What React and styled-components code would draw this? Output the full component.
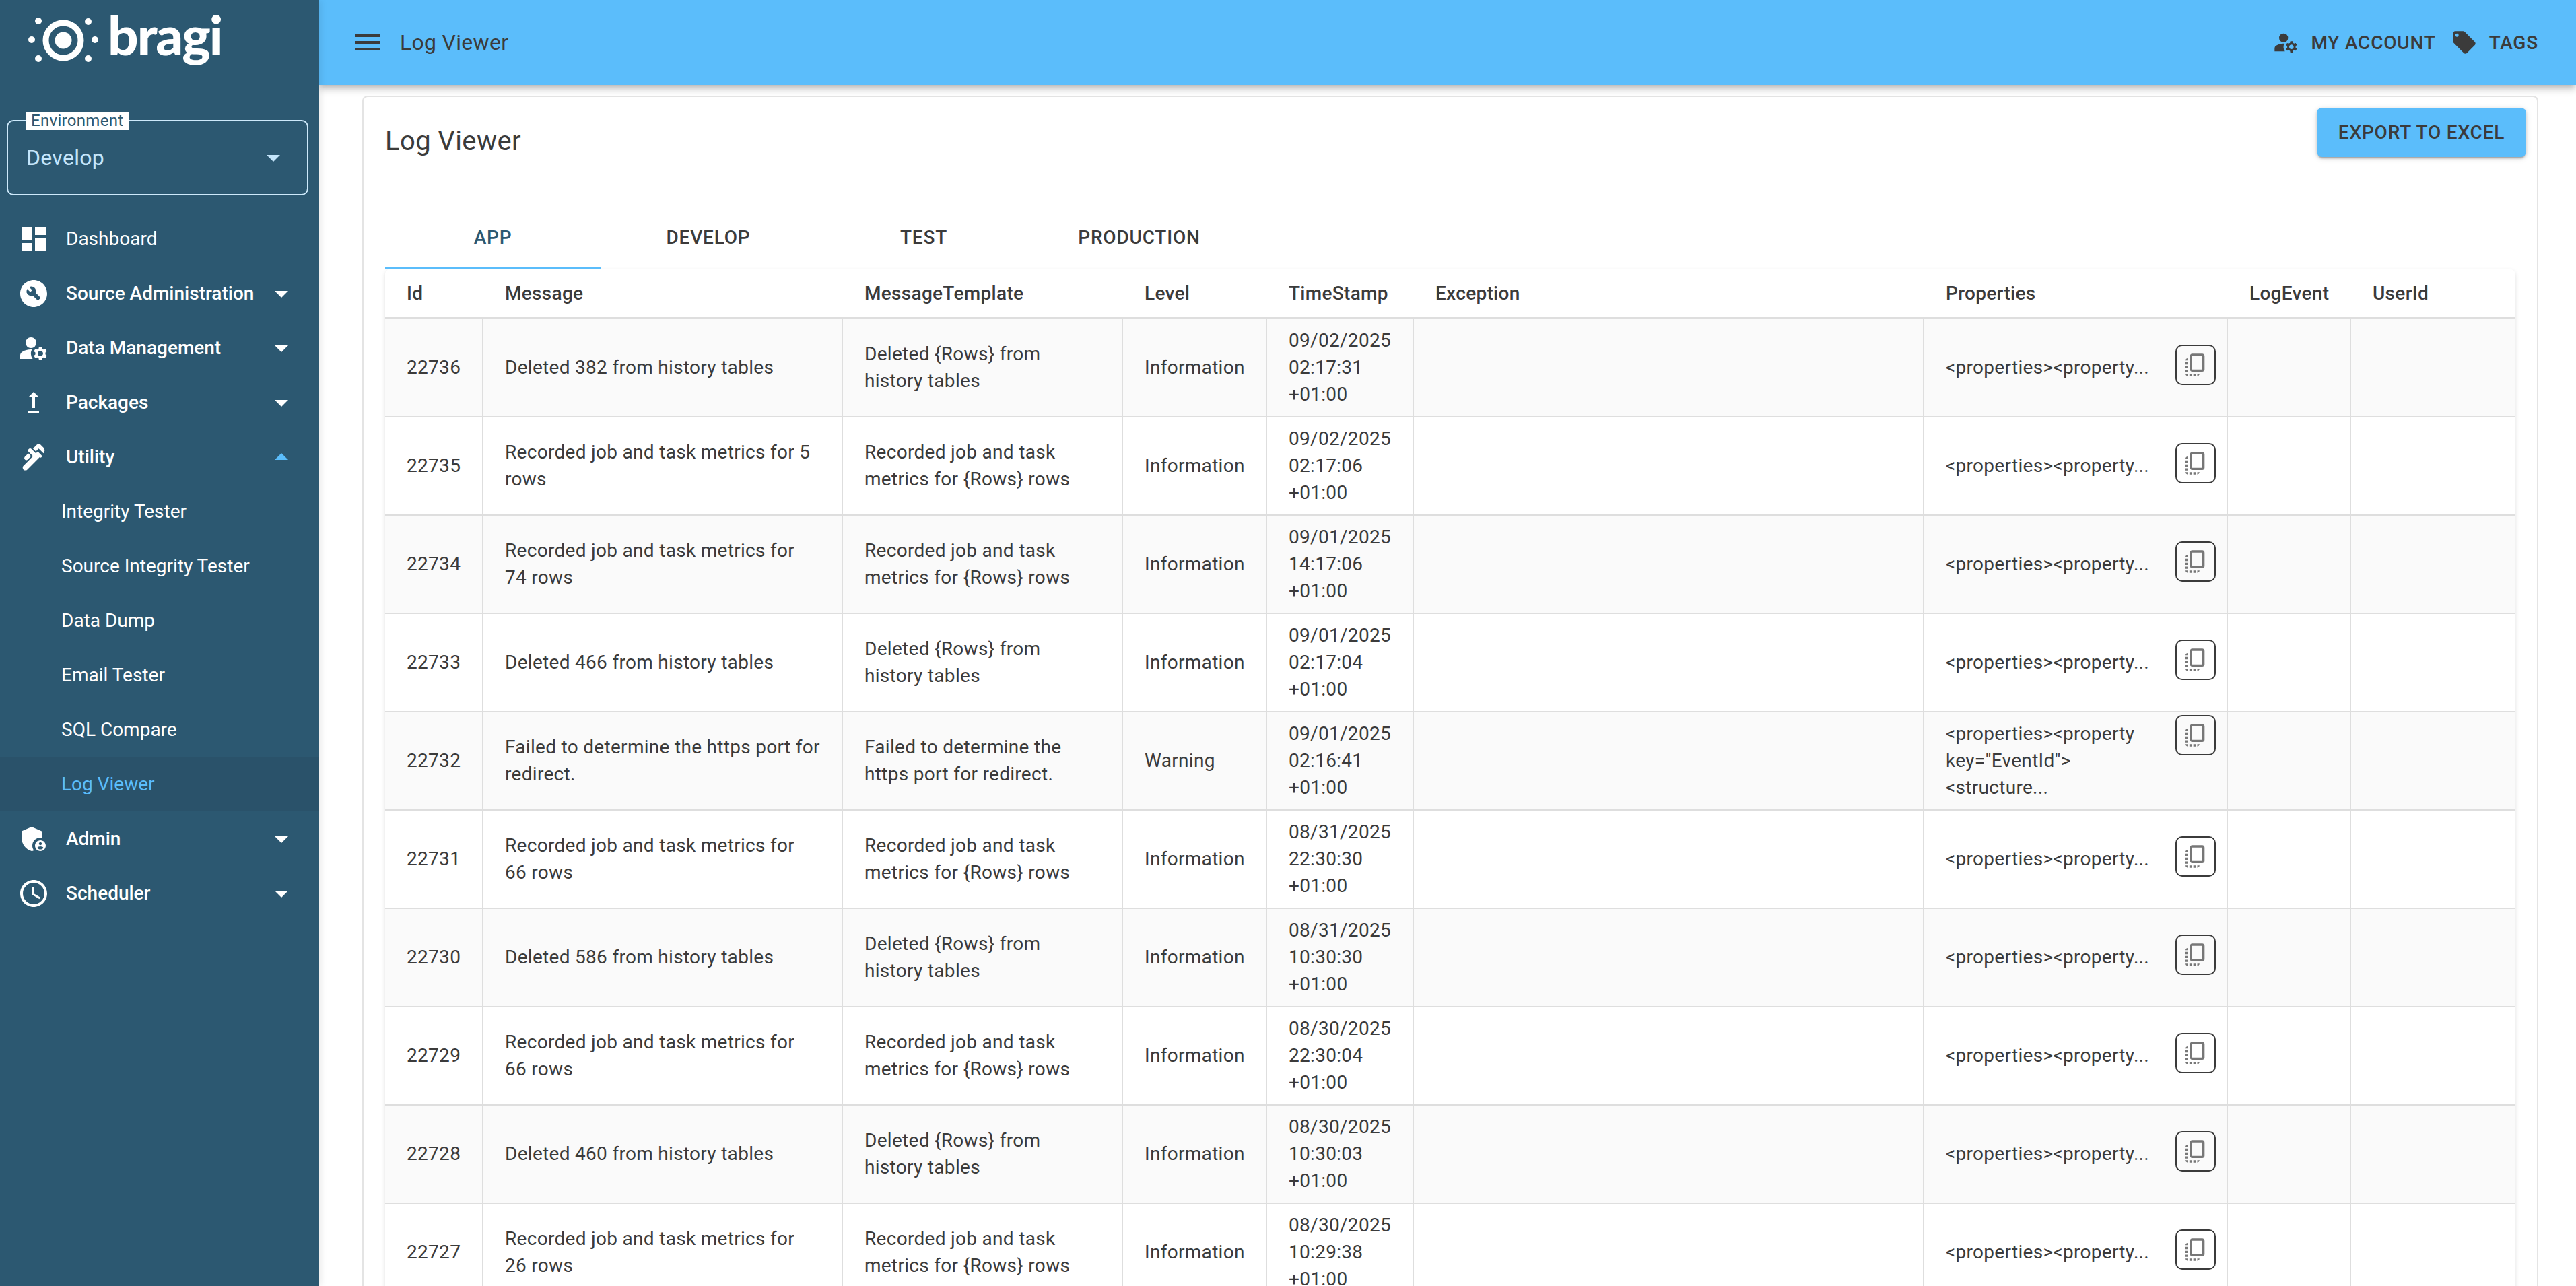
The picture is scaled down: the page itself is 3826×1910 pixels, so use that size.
import React from 'react'
import styled, { createGlobalStyle } from 'styled-components'
import {
  MdAccessTime,
  MdAdminPanelSettings,
  MdArrowDropDown,
  MdArrowDropUp,
  MdBuildCircle,
  MdCopyAll,
  MdDashboard,
  MdLocalOffer,
  MdManageAccounts,
  MdMenu,
  MdPlumbing,
  MdUpgrade
} from 'react-icons/md'

const SIDEBAR = '#2c5871'
const SKY = '#5bbdfb'
const INK = '#3b3b3b'
const LINE = '#dedede'

const GlobalStyle = createGlobalStyle`
  html, body {
    margin: 0;
    padding: 0;
    background: #fff;
    font-family: Roboto, "Liberation Sans", sans-serif;
    color: ${INK};
  }
`

const Page = styled.div`
  display: flex;
  width: 100vw;
  height: 100vh;
  overflow: hidden;
`

const Sidebar = styled.aside`
  flex: 0 0 474px;
  background: ${SIDEBAR};
  box-shadow: 2px 0 10px rgba(0, 0, 0, 0.1);
  z-index: 2;
`

const LogoBar = styled.div`
  height: 178px;
  padding-left: 40px;
`

const EnvField = styled.div`
  position: relative;
  display: flex;
  align-items: center;
  justify-content: space-between;
  box-sizing: border-box;
  width: 448px;
  height: 112px;
  margin-left: 10px;
  padding: 0 26px 0 27px;
  border: 2px solid #cde9fb;
  border-radius: 10px;
  color: #c4e5fb;
  font-size: 32px;
  letter-spacing: 0.3px;
`

const EnvLabel = styled.span`
  position: absolute;
  left: 26px;
  top: -14px;
  padding: 0 8px;
  background: #fff;
  color: ${SIDEBAR};
  font-size: 24px;
  line-height: 27px;
  letter-spacing: 0.3px;
`

const Nav = styled.nav`
  margin-top: 24px;
`

const NavRow = styled.div`
  display: flex;
  align-items: center;
  height: 81px;
  padding-left: ${props => (props.$sub ? '91px' : '26px')};
  padding-right: 32px;
  background: ${props => (props.$selected ? '#2a526a' : 'transparent')};
  color: ${props => (props.$selected ? SKY : '#fff')};
  font-size: 28px;
  font-weight: ${props => (props.$bold ? 500 : 400)};
`

const NavIcon = styled.span`
  display: flex;
  flex: 0 0 72px;
  color: #fff;
`

const NavLabel = styled.span`
  flex: 1;
`

const NavArrow = styled.span`
  display: flex;
  color: ${props => (props.$open ? SKY : '#fff')};
`

const Main = styled.main`
  flex: 1;
  min-width: 0;
`

const TopBar = styled.header`
  position: relative;
  z-index: 1;
  display: flex;
  align-items: center;
  height: 126px;
  padding: 0 56px 0 48px;
  background: ${SKY};
  box-shadow: 0 4px 8px -2px rgba(0, 0, 0, 0.2), 0 8px 10px 0 rgba(0, 0, 0, 0.14);
`

const MenuButton = styled.span`
  display: flex;
  color: ${INK};
`

const TopTitle = styled.h1`
  flex: 1;
  margin: 0 0 0 24px;
  font-size: 32px;
  font-weight: 400;
  letter-spacing: 0.3px;
`

const TopAction = styled.span`
  display: flex;
  align-items: center;
  margin-left: ${props => props.$gap};
  font-size: 28px;
  font-weight: 500;
  letter-spacing: 0.8px;
  text-transform: uppercase;
  svg {
    margin-right: 17px;
  }
`

const Card = styled.section`
  box-sizing: border-box;
  margin: 16px 56px 0 64px;
  border: 2px solid #e4e4e4;
  border-bottom: 0;
  border-radius: 8px 8px 0 0;
  padding: 16px 16px 0 32px;
`

const CardHeader = styled.div`
  display: flex;
  justify-content: space-between;
  align-items: flex-start;
  height: 144px;
`

const CardTitle = styled.h2`
  margin: 20px 0 0;
  font-size: 40px;
  line-height: 60px;
  font-weight: 400;
  letter-spacing: 0.4px;
`

const ExportButton = styled.button`
  width: 311px;
  height: 73px;
  border: 0;
  border-radius: 8px;
  background: ${SKY};
  color: ${INK};
  font-family: inherit;
  font-size: 28px;
  font-weight: 500;
  letter-spacing: 0.8px;
  text-transform: uppercase;
  box-shadow: 0 4px 2px -2px rgba(0, 0, 0, 0.2), 0 2px 4px 0 rgba(0, 0, 0, 0.14), 0 2px 10px 0 rgba(0, 0, 0, 0.12);
`

const TabBar = styled.div`
  display: flex;
  height: 96px;
`

const Tab = styled.div`
  display: flex;
  align-items: center;
  justify-content: center;
  box-sizing: border-box;
  width: 320px;
  padding-top: 4px;
  border-bottom: 4px solid ${props => (props.$active ? SKY : 'transparent')};
  color: ${props => (props.$active ? SIDEBAR : INK)};
  font-size: 28px;
  font-weight: 500;
  letter-spacing: 0.8px;
  text-transform: uppercase;
`

const TableShell = styled.div`
  width: 3164px;
  margin-right: 16px;
  border-radius: 8px 8px 0 0;
  box-shadow: 0 2px 6px rgba(0, 0, 0, 0.12);
`

const Table = styled.table`
  width: 100%;
  table-layout: fixed;
  border-collapse: separate;
  border-spacing: 0;
  font-size: 28px;
  line-height: 40px;
  letter-spacing: 0.3px;
`

const HeadCell = styled.th`
  box-sizing: border-box;
  height: 74px;
  padding: 0 32px;
  border-bottom: 3px solid ${LINE};
  background: #fff;
  font-weight: 500;
  text-align: left;
  &:first-child {
    border-top-left-radius: 8px;
  }
  &:last-child {
    border-top-right-radius: 8px;
  }
`

const Row = styled.tr`
  background: ${props => (props.$striped ? '#fafafa' : '#fff')};
`

const Cell = styled.td`
  box-sizing: border-box;
  height: 146px;
  padding: 0 32px;
  border-bottom: 2px solid ${LINE};
  border-right: 2px solid ${LINE};
  &:last-child {
    border-right: 0;
  }
`

const PropsBox = styled.div`
  display: flex;
  justify-content: space-between;
  align-items: flex-start;
`

const CopyButton = styled.span`
  display: flex;
  align-items: center;
  justify-content: center;
  flex: 0 0 auto;
  box-sizing: border-box;
  width: 60px;
  height: 60px;
  margin: ${props => (props.$long ? '-8px' : '-14px')} -16px -6px 0;
  border: 2px solid ${INK};
  border-radius: 10px;
  color: #777;
`

const columns = [
  ['Id', 146],
  ['Message', 534],
  ['MessageTemplate', 416],
  ['Level', 214],
  ['TimeStamp', 218],
  ['Exception', 758],
  ['Properties', 451],
  ['LogEvent', 183],
  ['UserId', 244]
]

const menu = [
  { label: 'Dashboard', icon: MdDashboard },
  { label: 'Source Administration', icon: MdBuildCircle, arrow: 'down', bold: true },
  { label: 'Data Management', icon: MdManageAccounts, arrow: 'down', bold: true },
  { label: 'Packages', icon: MdUpgrade, arrow: 'down', bold: true },
  { label: 'Utility', icon: MdPlumbing, arrow: 'up', bold: true },
  { label: 'Integrity Tester', sub: true },
  { label: 'Source Integrity Tester', sub: true },
  { label: 'Data Dump', sub: true },
  { label: 'Email Tester', sub: true },
  { label: 'SQL Compare', sub: true },
  { label: 'Log Viewer', sub: true, selected: true },
  { label: 'Admin', icon: MdAdminPanelSettings, arrow: 'down', bold: true },
  { label: 'Scheduler', icon: MdAccessTime, arrow: 'down', bold: true }
]

const tabs = ['App', 'Develop', 'Test', 'Production']

const deleted = n => [`Deleted ${n} from history tables`, 'Deleted {Rows} from history tables']
const recorded = n => [`Recorded job and task metrics for ${n} rows`, 'Recorded job and task metrics for {Rows} rows']
const failed = 'Failed to determine the https port for redirect.'

const rows = [
  [22736, deleted(382), 'Information', '09/02/2025 02:17:31 +01:00'],
  [22735, recorded(5), 'Information', '09/02/2025 02:17:06 +01:00'],
  [22734, recorded(74), 'Information', '09/01/2025 14:17:06 +01:00'],
  [22733, deleted(466), 'Information', '09/01/2025 02:17:04 +01:00'],
  [22732, [failed, failed], 'Warning', '09/01/2025 02:16:41 +01:00', true],
  [22731, recorded(66), 'Information', '08/31/2025 22:30:30 +01:00'],
  [22730, deleted(586), 'Information', '08/31/2025 10:30:30 +01:00'],
  [22729, recorded(66), 'Information', '08/30/2025 22:30:04 +01:00'],
  [22728, deleted(460), 'Information', '08/30/2025 10:30:03 +01:00'],
  [22727, recorded(26), 'Information', '08/30/2025 10:29:38 +01:00']
]

const BragiLogo = () => (
  <svg width="300" height="130" viewBox="40 0 300 130">
    <circle cx="94" cy="60" r="26" fill="none" stroke="#fff" strokeWidth="9" />
    <circle cx="94" cy="60" r="12.5" fill="#fff" />
    <circle cx="57" cy="31" r="5" fill="#fff" />
    <circle cx="131" cy="32" r="5" fill="#fff" />
    <circle cx="47" cy="59" r="5" fill="#fff" />
    <circle cx="141" cy="59" r="5" fill="#fff" />
    <circle cx="57" cy="87" r="5" fill="#fff" />
    <circle cx="131" cy="87" r="5" fill="#fff" />
    <text
      x="160"
      y="82"
      fill="#fff"
      fontFamily="Lato, sans-serif"
      fontWeight="900"
      fontSize="80"
      letterSpacing="-2"
    >
      bragi
    </text>
  </svg>
)

const PropertiesText = ({ long }) =>
  long ? (
    <span>
      {'<properties><property'}
      <br />
      {'key="EventId">'}
      <br />
      {'<structure...'}
    </span>
  ) : (
    <span>{'<properties><property...'}</span>
  )

export default function App() {
  return (
    <Page>
      <GlobalStyle />
      <Sidebar>
        <LogoBar>
          <BragiLogo />
        </LogoBar>
        <EnvField>
          <EnvLabel>Environment</EnvLabel>
          Develop
          <MdArrowDropDown size={48} />
        </EnvField>
        <Nav>
          {menu.map(item => (
            <NavRow key={item.label} $sub={item.sub} $selected={item.selected} $bold={item.bold}>
              {item.icon && (
                <NavIcon>
                  <item.icon size={48} />
                </NavIcon>
              )}
              <NavLabel>{item.label}</NavLabel>
              {item.arrow && (
                <NavArrow $open={item.arrow === 'up'}>
                  {item.arrow === 'up' ? <MdArrowDropUp size={48} /> : <MdArrowDropDown size={48} />}
                </NavArrow>
              )}
            </NavRow>
          ))}
        </Nav>
      </Sidebar>
      <Main>
        <TopBar>
          <MenuButton>
            <MdMenu size={48} />
          </MenuButton>
          <TopTitle>Log Viewer</TopTitle>
          <TopAction>
            <MdManageAccounts size={40} />
            My Account
          </TopAction>
          <TopAction $gap="22px">
            <MdLocalOffer size={40} />
            Tags
          </TopAction>
        </TopBar>
        <Card>
          <CardHeader>
            <CardTitle>Log Viewer</CardTitle>
            <ExportButton>Export to Excel</ExportButton>
          </CardHeader>
          <TabBar>
            {tabs.map((tab, i) => (
              <Tab key={tab} $active={i === 0}>
                {tab}
              </Tab>
            ))}
          </TabBar>
          <TableShell>
            <Table>
              <colgroup>
                {columns.map(([name, width]) => (
                  <col key={name} width={width} />
                ))}
              </colgroup>
              <thead>
                <tr>
                  {columns.map(([name]) => (
                    <HeadCell key={name}>{name}</HeadCell>
                  ))}
                </tr>
              </thead>
              <tbody>
                {rows.map(([id, [message, template], level, stamp, long], i) => (
                  <Row key={id} $striped={i % 2 === 0}>
                    <Cell>{id}</Cell>
                    <Cell>{message}</Cell>
                    <Cell>{template}</Cell>
                    <Cell>{level}</Cell>
                    <Cell>{stamp}</Cell>
                    <Cell />
                    <Cell>
                      <PropsBox>
                        <PropertiesText long={long} />
                        <CopyButton $long={long}>
                          <MdCopyAll size={40} />
                        </CopyButton>
                      </PropsBox>
                    </Cell>
                    <Cell />
                    <Cell />
                  </Row>
                ))}
              </tbody>
            </Table>
          </TableShell>
        </Card>
      </Main>
    </Page>
  )
}
